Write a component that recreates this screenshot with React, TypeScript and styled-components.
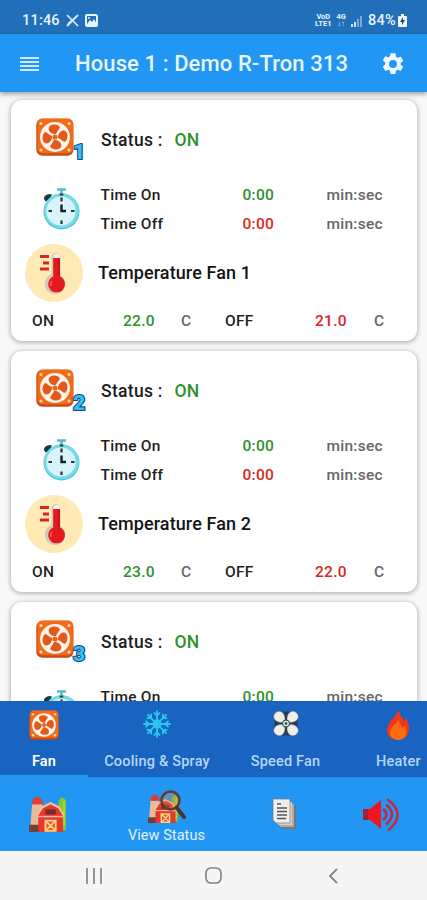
import React from 'react';
import styled, { createGlobalStyle } from 'styled-components';

const Global = createGlobalStyle`
  * { box-sizing: border-box; }
  body { margin: 0; background: #fafafa; font-family: Roboto, "Liberation Sans", sans-serif; }
  svg { display: block; flex: none; }
`;

const Screen = styled.div`
  width: 427px;
  height: 900px;
  display: flex;
  flex-direction: column;
  overflow: hidden;
  background: #f8f8f8;
`;

const StatusBar = styled.header`
  height: 34px;
  flex: none;
  display: flex;
  align-items: center;
  justify-content: space-between;
  padding: 7px 20px 0 22px;
  background: #216fb8;
  color: #e9f4ff;
`;

const StatusGroup = styled.div<{ $gap: number }>`
  display: flex;
  align-items: center;
  gap: ${(p) => p.$gap}px;
`;

const StatusText = styled.span<{ $spacing: number }>`
  font-size: 14.5px;
  line-height: 16px;
  font-weight: 500;
  letter-spacing: ${(p) => p.$spacing}px;
`;

const TinyStack = styled.span`
  font-size: 7.5px;
  line-height: 6.5px;
  font-weight: 700;
  text-align: center;
  white-space: pre-line;
`;

const AppBar = styled.div`
  height: 58px;
  flex: none;
  display: flex;
  align-items: center;
  padding: 1px 21px 0 20px;
  background: #2196f3;
  box-shadow: 0 2px 5px rgba(0, 0, 0, 0.38);
  position: relative;
`;

const Title = styled.h1`
  margin: 0 0 0 36px;
  flex: 1;
  font-size: 22px;
  line-height: 28px;
  font-weight: 500;
  letter-spacing: 0.1px;
  color: #e8f5ff;
  white-space: nowrap;
`;

const Content = styled.main`
  height: 609px;
  flex: none;
  overflow: hidden;
  display: flex;
  flex-direction: column;
  gap: 10px;
  padding: 8px 10px 0 11px;
`;

const Card = styled.section`
  height: 241px;
  flex: none;
  display: flex;
  flex-direction: column;
  border-radius: 11px;
  background: #fff;
  box-shadow: 0 1px 4px 1px rgba(0, 0, 0, 0.26);
`;

const StatusRow = styled.div`
  height: 80px;
  display: flex;
  align-items: center;
  padding-left: 25px;
  font-size: 17.5px;
  font-weight: 500;
  letter-spacing: 0.3px;
  color: #1c1c1c;
`;

const StatusLabel = styled.span`
  width: 73.5px;
  margin-left: 14px;
`;

const Value = styled.span<{ $tone: 'on' | 'off' }>`
  color: ${(p) => (p.$tone === 'on' ? '#2e912f' : '#d92723')};
`;

const TimeBlock = styled.div`
  height: 59px;
  display: grid;
  grid-template-columns: 58.500px 142px 84px 80px;
  grid-template-rows: 29px 29px;
  align-items: center;
  padding-left: 31px;
  font-size: 15.5px;
  font-weight: 500;
  letter-spacing: 0.25px;
  color: #1f1f1f;
`;

const ClockCell = styled.div`
  grid-row: 1 / 3;
`;

const Unit = styled.span`
  color: #666;
`;

const TempHeading = styled.div`
  height: 67px;
  display: flex;
  align-items: center;
  gap: 15px;
  padding-left: 14px;
  font-size: 18px;
  font-weight: 500;
  letter-spacing: 0.1px;
  color: #141414;
`;

const LimitRow = styled.div`
  height: 29px;
  display: grid;
  grid-template-columns: 91px 58px 44px 90px 59px 20px;
  align-items: center;
  padding-left: 21px;
  font-size: 15.5px;
  font-weight: 500;
  letter-spacing: 0.3px;
  color: #1f1f1f;
`;

const TabBar = styled.nav`
  height: 76px;
  flex: none;
  display: grid;
  grid-template-columns: 88px 138px 119px 107px;
  background: #1963c1;
  overflow: hidden;
`;

const Tab = styled.div<{ $active?: boolean }>`
  display: flex;
  flex-direction: column;
  align-items: center;
  justify-content: space-between;
  padding: 9px 0 4px;
  border-bottom: 2px solid ${(p) => (p.$active ? '#2196f3' : '#1963c1')};
  font-size: 14.5px;
  line-height: 18px;
  font-weight: ${(p) => (p.$active ? 600 : 500)};
  letter-spacing: 0.2px;
  white-space: nowrap;
  color: ${(p) => (p.$active ? '#fff' : '#b5d6f7')};
`;

const BottomNav = styled.nav`
  height: 74px;
  flex: none;
  display: grid;
  grid-template-columns: 94px 145px 90px 104px;
  background: #2196f3;
`;

const NavItem = styled.div<{ $labelled?: boolean }>`
  display: flex;
  flex-direction: column;
  align-items: center;
  justify-content: center;
  gap: 3px;
  padding-top: ${(p) => (p.$labelled ? 6 : 0)}px;
  color: #e3f2ff;
  font-size: 14.5px;
  line-height: 18px;
  letter-spacing: 0.05px;
`;

const SystemNav = styled.footer`
  height: 49px;
  flex: none;
  display: grid;
  grid-template-columns: 187px 52px 188px;
  justify-items: center;
  align-items: center;
  background: #f5f5f5;
`;

const blade = 'M18 16C12.5 14.5 11 9.5 14.5 7.4C18 5.5 23 7 24 9.5C23 11.5 21.5 12.5 20 16Z';

const FanDrawing = () => (
  <>
    <rect x="0.3" y="0.7" width="37.2" height="37" rx="6" fill="#c74b16" />
    <rect x="1.5" y="0.5" width="35.5" height="34.8" rx="5" fill="#f36b16" />
    <circle cx="19" cy="19" r="15" fill="#fff4ea" />
    {[0, 90, 180, 270].map((a) => (
      <path key={a} d={blade} fill="#e4581a" transform={`rotate(${a} 19 19)`} />
    ))}
    <circle cx="19" cy="19" r="2.6" fill="#ee6519" />
    {[[5, 5.5], [33, 5.5], [5, 32], [33, 32]].map(([x, y]) => (
      <circle key={`${x}-${y}`} cx={x} cy={y} r="1.5" fill="#ffdfbf" />
    ))}
  </>
);

const NumberedFan = ({ n }: { n: number }) => (
  <svg width="51" height="46" viewBox="0 0 51 46">
    <g transform="translate(0 1)"><FanDrawing /></g>
    <text
      x="43" y="42" textAnchor="middle" fontFamily="Roboto, sans-serif" fontSize="21" fontWeight="900" letterSpacing="0"
      fill="#35bff5" stroke="#15447c" strokeWidth="2.2" strokeLinejoin="round" paintOrder="stroke"
    >{n}</text>
  </svg>
);

const Stopwatch = () => (
  <svg width="39" height="42" viewBox="0 0 39 42">
    <path d="M3.5 13.5Q0.5 10 3.5 7.5T10 6.5L8 11Z" fill="#173b49" />
    <path d="M19.5 2V8M15 1.5h9" stroke="#50bdca" strokeWidth="2.4" />
    <circle cx="19.5" cy="23.4" r="18" fill="#48bfd2" />
    <circle cx="19.5" cy="22.8" r="17.4" fill="#75dce7" />
    <circle cx="19" cy="23" r="14.6" fill="#d8f3fa" />
    <path d="M17.7 6.5h3.6" stroke="#23424b" strokeWidth="2" />
    <path d="M19.5 9.5v4M19.5 32.5v3.5M6.5 23h3.5M29 23h3.5" stroke="#203a43" strokeWidth="2.2" />
    <path d="M19.5 16.5V23H24" fill="none" stroke="#111f26" strokeWidth="2.4" />
  </svg>
);

const Thermometer = () => (
  <svg width="58" height="58" viewBox="0 0 58 58">
    <circle cx="29" cy="29" r="29" fill="#ffeab5" />
    <path d="M26.5 30V13.5a4.5 4.5 0 0 1 9 0V31a10.3 10.3 0 1 1-9-1Z" fill="#d1c8bb" />
    <path d="M28.5 13a3.2 3.2 0 0 1 6.4 0v3h-6.4Z" fill="#f5efe5" />
    <path d="M28.2 14h6.8V32.5a8.3 8.3 0 1 1-6.8 0Z" fill="#e3191e" />
    <path d="M34 15v17" stroke="#b81720" strokeWidth="1.5" />
    <path d="M15 12.5h9M18 19h6M15 25h9" stroke="#d5252c" strokeWidth="2.8" />
    <path d="M27 37q-2 2-1 5" fill="none" stroke="#ff5b51" strokeWidth="1.5" />
  </svg>
);

const FanCard = ({ n, on, off }: { n: number; on: string; off: string }) => (
  <Card>
    <StatusRow>
      <NumberedFan n={n} />
      <StatusLabel>Status :</StatusLabel>
      <Value $tone="on">ON</Value>
    </StatusRow>
    <TimeBlock>
      <ClockCell><Stopwatch /></ClockCell>
      <span>Time On</span><Value $tone="on">0:00</Value><Unit>min:sec</Unit>
      <span>Time Off</span><Value $tone="off">0:00</Value><Unit>min:sec</Unit>
    </TimeBlock>
    <TempHeading><Thermometer /><span>Temperature Fan {n}</span></TempHeading>
    <LimitRow>
      <span>ON</span><Value $tone="on">{on}</Value><Unit>C</Unit>
      <span>OFF</span><Value $tone="off">{off}</Value><Unit>C</Unit>
    </LimitRow>
  </Card>
);

const Snowflake = () => (
  <svg width="28" height="28" viewBox="0 0 28 28" fill="none" stroke="#27c8ee" strokeWidth="1.8" strokeLinecap="round">
    {[0, 45, 90, 135, 180, 225, 270, 315].map((a) => (
      <path key={a} d="M14 14V1M14 5.8L11.4 3M14 5.8L16.6 3" transform={`rotate(${a} 14 14)`} />
    ))}
    <circle cx="14" cy="14" r="3.6" />
  </svg>
);

const SpeedFan = () => (
  <svg width="26" height="27" viewBox="0 0 26 27">
    <rect x="1.5" y="1.5" width="23" height="24" rx="5" fill="#263e56" />
    {[45, 135, 225, 315].map((a) => (
      <path key={a} d="M12 10.5C6 7 6.5-1.5 13-1.5S20 7 14 10.5Z" transform={`rotate(${a} 13 13.5)`} fill="#efefea" stroke="#777c7d" strokeWidth="0.4" />
    ))}
    <circle cx="13" cy="13.5" r="3.5" fill="#dededb" stroke="#333e4a" />
    <circle cx="13" cy="13.5" r="1.2" fill="#25313e" />
  </svg>
);

const Flame = () => (
  <svg width="28" height="30" viewBox="0 0 28 30">
    <path d="M13 0C15 5 18 8 19 11L21 8C26 16 26 29 13 30C1 29 0 20 5 12C9 7 12 4 13 0Z" fill="#f13718" />
    <path d="M13 9C14 14 17 15 17 18L20 16C24 25 19 30 13 30C4 29 3 21 7 17C11 13 13 12 13 9Z" fill="#ff6b13" />
  </svg>
);

const BarnDrawing = () => (
  <>
    <path d="M29 4Q32-1 36 4V33H28Z" fill="#82c72d" />
    <path d="M34 5v24" stroke="#a7d640" strokeWidth="2" />
    <path d="M3 8h10l1 26H1Z" fill="#eab995" />
    <path d="M3 8Q3 1 8 1t6 7Z" fill="#e43c35" />
    <path d="M0 28h10v7H0Z" fill="#704037" />
    <path d="M9 18L14 10L21 7l7 3l5 8v17H9Z" fill="#e8362c" />
    <path d="M8 19L13 11L21 7l8 4l5 8" fill="none" stroke="#f0c29d" strokeWidth="2" />
    <path d="M16 13h10v5H16Z" fill="#6c302d" />
    <path d="M9 20h24" stroke="#efb99a" strokeWidth="1.5" />
    <path d="M16 24h10v10H16Z M16 24l10 10M26 24L16 34" fill="#df572c" stroke="#ffd081" strokeWidth="1.8" />
  </>
);

const Barn = () => <svg width="39" height="37" viewBox="-1 0 38 36"><BarnDrawing /></svg>;

const BarnSearch = () => (
  <svg width="39" height="34" viewBox="0 0 39 34">
    <g transform="translate(1 4) scale(.83)"><BarnDrawing /></g>
    <circle cx="23.5" cy="10.5" r="9" fill="#d98a55" fillOpacity="0.32" stroke="#5d3b30" strokeWidth="2.5" />
    <path d="M29.5 17.5L37 27" stroke="#513129" strokeWidth="3.8" strokeLinecap="round" />
  </svg>
);

const Pages = () => (
  <svg width="25" height="32" viewBox="0 0 25 32">
    <path d="M7 8h17v23H12L5 26Z" fill="#777" />
    <path d="M6 6h16v23H9L4 24Z" fill="#aaa" />
    <path d="M4 4h16v23H7L2 23Z" fill="#d6d2cb" />
    <path d="M1 1h17v24H4l-3-3Z" fill="#eee" stroke="#777" strokeWidth="0.7" />
    <path d="M5 6h4M5 10h10M5 13.5h10M5 17h10M5 20.5h9" stroke="#555" strokeWidth="1.5" />
  </svg>
);

const Speaker = () => (
  <svg width="37" height="35" viewBox="0 0 37 35" fill="none">
    <path d="M0 12h7L18 3v29L7 23H0Z" fill="#f31420" />
    <path d="M0 12h5v11H0Z" fill="#9f2434" />
    <path d="M17.5 4v27" stroke="#c62738" strokeWidth="1" />
    <path d="M20 12q7 5.5 0 11M23 7.5q12 10 0 20M24 2q21 15.500 1 31.500" stroke="#cc2438" strokeWidth="2.5" />
  </svg>
);

const Gear = () => (
  <svg width="26" height="26" viewBox="0 0 24 24" fill="#eef8ff">
    <path d="M19.14 12.94c.04-.3.06-.61.06-.94s-.02-.64-.07-.94l2.03-1.58a.49.49 0 0 0 .12-.61l-1.92-3.32a.49.49 0 0 0-.59-.22l-2.39.96a7 7 0 0 0-1.62-.94l-.36-2.54A.48.48 0 0 0 13.92 2h-3.84a.48.48 0 0 0-.48.41l-.36 2.54a7 7 0 0 0-1.62.94l-2.39-.96a.48.48 0 0 0-.59.22L2.72 8.47a.48.48 0 0 0 .12.61l2.03 1.58c-.05.3-.09.63-.09.94s.02.64.07.94l-2.03 1.58a.49.49 0 0 0-.12.61l1.92 3.32c.12.22.37.29.59.22l2.39-.96c.5.38 1.04.7 1.62.94l.36 2.54c.05.24.24.41.48.41h3.84c.24 0 .44-.17.48-.41l.36-2.54a7 7 0 0 0 1.62-.94l2.39.96c.22.08.47 0 .59-.22l1.92-3.32a.48.48 0 0 0-.12-.61ZM12 15.6a3.6 3.6 0 1 1 0-7.2 3.6 3.6 0 0 1 0 7.2Z" />
  </svg>
);

export default function App() {
  return (
    <Screen>
      <Global />
      <StatusBar>
        <StatusGroup $gap={6}>
          <StatusText $spacing={0.2}>11:46</StatusText>
          <svg width="13" height="13" viewBox="0 0 13 13" stroke="#d9ebfb"><path d="M1 1l11 11" strokeWidth="1.6" /><path d="M1 12L12 1M2 10l8-7" strokeWidth="1.8" /></svg>
          <svg width="13" height="13" viewBox="0 0 13 13"><path fillRule="evenodd" d="M2 0h9q2 0 2 2v9q0 2-2 2H2q-2 0-2-2V2q0-2 2-2Zm0 2v8h9V2Z" fill="#e5f3ff" /><path d="M2 10l3-4l2 2l2-3l3 5Z" fill="#e5f3ff" /><circle cx="4" cy="4" r="1" fill="#e5f3ff" /></svg>
        </StatusGroup>
        <StatusGroup $gap={5}>
          <TinyStack>{'VoD\nLTE1'}</TinyStack>
          <TinyStack>{'4G\n↓↑'}</TinyStack>
          <svg width="12" height="12" viewBox="0 0 12 12"><path d="M0 9h2v3H0ZM3 7h2v5H3Z" fill="#d1e5f8" /><path d="M6 4h2v8H6ZM9 1h2v11H9Z" fill="#79a9d6" /></svg>
          <StatusGroup $gap={2}>
            <StatusText $spacing={0.3}>84%</StatusText>
            <svg width="9" height="13" viewBox="0 0 9 13"><path d="M3 0h3v2h2q1 0 1 1v9q0 1-1 1H1q-1 0-1-1V3q0-1 1-1h2Z" fill="#f0f8ff" /><path d="M5 3L2 8h2v3l3-5H5Z" fill="#21486c" /></svg>
          </StatusGroup>
        </StatusGroup>
      </StatusBar>
      <AppBar>
        <svg width="19" height="14" viewBox="0 0 19 14" stroke="#cce8ff" strokeWidth="2"><path d="M0 1h19M0 5h19M0 9h19M0 13h19" /></svg>
        <Title>House 1 : Demo R-Tron 313</Title>
        <Gear />
      </AppBar>
      <Content>
        <FanCard n={1} on="22.0" off="21.0" />
        <FanCard n={2} on="23.0" off="22.0" />
        <FanCard n={3} on="24.0" off="23.0" />
      </Content>
      <TabBar>
        <Tab $active><svg width="30" height="30" viewBox="0 0 38 38"><FanDrawing /></svg>Fan</Tab>
        <Tab><Snowflake />Cooling &amp; Spray</Tab>
        <Tab><SpeedFan />Speed Fan</Tab>
        <Tab><Flame />Heater</Tab>
      </TabBar>
      <BottomNav>
        <NavItem><Barn /></NavItem>
        <NavItem $labelled><BarnSearch />View Status</NavItem>
        <NavItem><Pages /></NavItem>
        <NavItem><Speaker /></NavItem>
      </BottomNav>
      <SystemNav>
        <svg width="16" height="16" viewBox="0 0 16 16" stroke="#858585" strokeWidth="1.7"><path d="M1 0v16M8 0v16M15 0v16" /></svg>
        <svg width="17" height="17" viewBox="0 0 17 17" fill="none" stroke="#858585" strokeWidth="1.7"><rect x="1" y="1" width="15" height="15" rx="5" /></svg>
        <svg width="10" height="16" viewBox="0 0 10 16" fill="none" stroke="#858585" strokeWidth="1.8"><path d="M9 1L2 8l7 7" /></svg>
      </SystemNav>
    </Screen>
  );
}
